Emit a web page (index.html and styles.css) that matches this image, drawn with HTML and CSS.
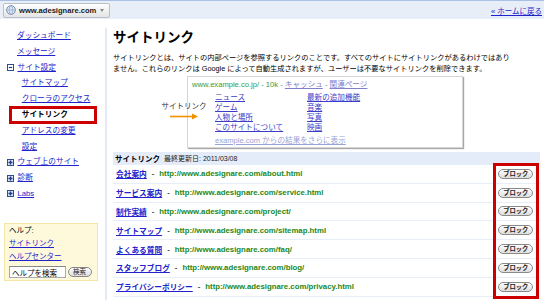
FILE: index.html
```html
<!DOCTYPE html>
<html lang="ja">
<head>
<meta charset="utf-8">
<title>サイトリンク</title>
<link rel="stylesheet" href="styles.css">
</head>
<body>
<header class="topbar">
  <div class="site-select">
    <svg class="globe" width="10" height="10" viewBox="0 0 10 10"><circle cx="5" cy="5" r="4.4" fill="#dbe4f1" stroke="#6f88b3" stroke-width="0.9"/><ellipse cx="5" cy="5" rx="1.8" ry="4.2" fill="none" stroke="#8ea3c6" stroke-width="0.6"/><path d="M1 5h8" stroke="#8ea3c6" stroke-width="0.6"/></svg>
    <span class="site-name">www.adesignare.com</span>
    <span class="caret"></span>
  </div>
  <a class="home-link" href="#">« ホームに戻る</a>
</header>
<div class="layout">
  <nav class="sidebar">
    <ul class="nav">
      <li class="nav-top"><a href="#">ダッシュボード</a></li>
      <li class="nav-top"><a href="#">メッセージ</a></li>
      <li class="nav-group"><svg class="toggle" width="7" height="7" viewBox="0 0 7 7"><rect x="0.5" y="0.5" width="6" height="6" fill="#fff" stroke="#2b4e8c"/><path d="M1.8 3.5h3.4" stroke="#1b3d8c" stroke-width="1.2"/></svg><a href="#">サイト設定</a></li>
      <li class="nav-sub"><a href="#">サイトマップ</a></li>
      <li class="nav-sub"><a href="#">クローラのアクセス</a></li>
      <li class="nav-sub nav-current">サイトリンク</li>
      <li class="nav-sub"><a href="#">アドレスの変更</a></li>
      <li class="nav-sub"><a href="#">設定</a></li>
      <li class="nav-group"><svg class="toggle" width="7" height="7" viewBox="0 0 7 7"><rect x="0.5" y="0.5" width="6" height="6" fill="#dfe7f5" stroke="#2b4e8c"/><path d="M3.5 1.5v4M1.5 3.5h4" stroke="#1b3d8c" stroke-width="1.4"/></svg><a href="#">ウェブ上のサイト</a></li>
      <li class="nav-group"><svg class="toggle" width="7" height="7" viewBox="0 0 7 7"><rect x="0.5" y="0.5" width="6" height="6" fill="#dfe7f5" stroke="#2b4e8c"/><path d="M3.5 1.5v4M1.5 3.5h4" stroke="#1b3d8c" stroke-width="1.4"/></svg><a href="#">診断</a></li>
      <li class="nav-group"><svg class="toggle" width="7" height="7" viewBox="0 0 7 7"><rect x="0.5" y="0.5" width="6" height="6" fill="#dfe7f5" stroke="#2b4e8c"/><path d="M3.5 1.5v4M1.5 3.5h4" stroke="#1b3d8c" stroke-width="1.4"/></svg><a href="#">Labs</a></li>
    </ul>
    <div class="help">
      <div class="help-title">ヘルプ:</div>
      <div><a href="#">サイトリンク</a></div>
      <div><a href="#">ヘルプセンター</a></div>
      <div class="help-search">
        <input class="help-input" type="text" value="ヘルプを検索">
        <button class="help-btn" type="button">検索</button>
      </div>
    </div>
  </nav>
  <main class="main">
    <h1 class="title">サイトリンク</h1>
    <p class="desc">サイトリンクとは、サイトの内部ページを参照するリンクのことです。すべてのサイトにサイトリンクがあるわけではありません。これらのリンクは Google によって自動生成されますが、ユーザーは不要なサイトリンクを削除できます。</p>
    <div class="figure">
      <div class="example">
        <div class="ex-head"><span class="ex-url">www.example.co.jp/ - 10k</span><span class="ex-dash"> - </span><a href="#">キャッシュ</a><span class="ex-dash"> - </span><a href="#">関連ページ</a></div>
        <div class="ex-links">
          <a href="#">ニュース</a><a href="#">最新の追加機能</a>
          <a href="#">ゲーム</a><a href="#">音楽</a>
          <a href="#">人物と場所</a><a href="#">写真</a>
          <a href="#">このサイトについて</a><a href="#">映画</a>
        </div>
        <div class="ex-more"><a href="#">example.com からの結果をさらに表示</a></div>
      </div>
      <div class="ex-label">サイトリンク</div>
      <svg class="ex-arrow" width="29" height="7" viewBox="0 0 29 7"><path d="M0 3.5h23" stroke="#f39200" stroke-width="1.6"/><path d="M22 0.5l6 3-6 3z" fill="#f39200"/></svg>
    </div>
    <div class="sl-table">
      <div class="sl-head"><span class="sl-head-title">サイトリンク</span><span class="sl-head-date">最終更新日: 2011/03/08</span></div>
      <div class="sl-row"><a href="#">会社案内</a><span class="sep">-</span><span class="url">http://www.adesignare.com/about.html</span><button class="block-btn" type="button">ブロック</button></div>
      <div class="sl-row"><a href="#">サービス案内</a><span class="sep">-</span><span class="url">http://www.adesignare.com/service.html</span><button class="block-btn" type="button">ブロック</button></div>
      <div class="sl-row"><a href="#">制作実績</a><span class="sep">-</span><span class="url">http://www.adesignare.com/project/</span><button class="block-btn" type="button">ブロック</button></div>
      <div class="sl-row"><a href="#">サイトマップ</a><span class="sep">-</span><span class="url">http://www.adesignare.com/sitemap.html</span><button class="block-btn" type="button">ブロック</button></div>
      <div class="sl-row"><a href="#">よくある質問</a><span class="sep">-</span><span class="url">http://www.adesignare.com/faq/</span><button class="block-btn" type="button">ブロック</button></div>
      <div class="sl-row"><a href="#">スタッフブログ</a><span class="sep">-</span><span class="url">http://www.adesignare.com/blog/</span><button class="block-btn" type="button">ブロック</button></div>
      <div class="sl-row"><a href="#">プライバシーポリシー</a><span class="sep">-</span><span class="url">http://www.adesignare.com/privacy.html</span><button class="block-btn" type="button">ブロック</button></div>
      <div class="red-frame"></div>
    </div>
  </main>
</div>
</body>
</html>
```
FILE: styles.css
```css
html, body {
  margin: 0;
  padding: 0;
  background: #fff;
}
body {
  width: 544px;
  height: 300px;
  overflow: hidden;
  font-family: "Liberation Sans", "Noto Sans CJK JP", sans-serif;
  color: #000;
}
a {
  color: #2222cc;
  text-decoration: underline;
}

/* top bar */
.topbar {
  box-sizing: border-box;
  height: 19px;
  border-top: 1px solid #a9bfe4;
  background: #e8eef8;
  display: flex;
  align-items: center;
  justify-content: space-between;
  padding: 0 2px 0 3px;
}
.site-select {
  box-sizing: border-box;
  width: 107px;
  height: 15px;
  border: 1px solid #b7c0cc;
  border-radius: 2px;
  background: linear-gradient(#fefefe, #e4e4e4);
  display: flex;
  align-items: center;
  padding-left: 2px;
}
.globe {
  display: block;
  flex: none;
}
.site-name {
  margin-left: 3px;
  font-size: 7.6px;
  font-weight: bold;
  color: #222;
}
.caret {
  margin-left: 4px;
  width: 0;
  height: 0;
  border-left: 2.5px solid transparent;
  border-right: 2.5px solid transparent;
  border-top: 3px solid #888;
}
.home-link {
  font-size: 7.5px;
}

/* layout */
.layout {
  display: flex;
  margin-top: 9px;
  height: 272px;
}
.sidebar {
  width: 105px;
  flex: none;
  border-right: 2px solid #e3e9f4;
}
.nav {
  list-style: none;
  margin: 0;
  padding: 0;
  font-size: 7.7px;
}
.nav li {
  height: 15.8px;
  line-height: 15.8px;
  display: flex;
  align-items: center;
}
.nav-top {
  padding-left: 17px;
}
.nav-group {
  padding-left: 6.5px;
}
.toggle {
  display: block;
  margin-right: 4px;
  flex: none;
}
.nav-sub {
  padding-left: 21.7px;
}
.nav .nav-current {
  box-sizing: border-box;
  width: 86px;
  margin-left: 10px;
  padding-left: 11.7px;
  font-weight: bold;
  color: #000;
  outline: 3px solid #cc0000;
  outline-offset: -2px;
}

/* help */
.help {
  box-sizing: border-box;
  width: 94px;
  margin: 21px 0 0 4px;
  background: #fff9dc;
  border: 1px solid #f6e6a6;
  padding: 0 4px 2px 4px;
  font-size: 7.5px;
  line-height: 13.2px;
}
.help-search {
  display: flex;
  align-items: center;
  margin-top: 3px;
}
.help-input {
  box-sizing: border-box;
  width: 57px;
  height: 12px;
  margin: 0;
  padding: 0 0 0 2px;
  border: 1px solid #aaa;
  border-top-color: #888;
  font-family: inherit;
  font-size: 7.5px;
  color: #000;
}
.help-btn {
  box-sizing: border-box;
  width: 24px;
  height: 10px;
  margin: 0 0 0 1.5px;
  padding: 0;
  border: 1px solid #888;
  border-radius: 5px;
  background: linear-gradient(#fff, #ddd);
  font-family: inherit;
  font-size: 6.5px;
  line-height: 8px;
  color: #222;
}

/* main */
.main {
  flex: 1;
  min-width: 0;
  padding: 0 4px 0 6px;
}
.title {
  margin: 2px 0 0;
  font-size: 13.5px;
  line-height: 16px;
  font-weight: bold;
}
.desc {
  margin: 6px 0 0;
  max-width: 402px;
  font-size: 7.25px;
  line-height: 11px;
}

/* example figure */
.figure {
  position: relative;
  margin-top: 2px;
}
.example {
  box-sizing: border-box;
  width: 276px;
  height: 72px;
  margin-left: 74px;
  border: 1px solid #d6d6d6;
  box-shadow: 1px 1px 1px #a8a8a8;
  padding: 3px 0 0 4px;
  font-size: 7.6px;
  line-height: 10px;
}
.example a {
  color: #3c3cc8;
}
.ex-head .ex-url {
  color: #3b9a3b;
}
.ex-dash {
  color: #6a9a6a;
}
.ex-head a {
  color: #8080cc;
}
.ex-links {
  display: grid;
  grid-template-columns: 92px auto;
  justify-items: start;
  margin: 3.4px 0 0 23px;
  line-height: 9.8px;
}
.ex-more {
  margin: 3px 0 0 23px;
}
.ex-more a {
  color: #99a3d6;
}
.ex-label {
  position: absolute;
  left: 48.5px;
  top: 26.3px;
  font-size: 7.5px;
  line-height: 10px;
  color: #333;
}
.ex-arrow {
  position: absolute;
  left: 57px;
  top: 37.3px;
  display: block;
}

/* sitelinks table */
.sl-table {
  position: relative;
  margin-top: 3.7px;
}
.sl-head {
  box-sizing: border-box;
  height: 13.3px;
  background: #e5ecf9;
  display: flex;
  align-items: center;
  padding-left: 2px;
}
.sl-head-title {
  font-size: 7.5px;
  font-weight: bold;
}
.sl-head-date {
  margin-left: 4px;
  font-size: 7px;
  color: #222;
}
.sl-row {
  box-sizing: border-box;
  height: 18.8px;
  border-bottom: 1px solid #e8eef8;
  display: flex;
  align-items: center;
  padding: 0 6.7px 0 3px;
  font-size: 7.7px;
  font-weight: bold;
}
.sep {
  margin: 0 5px;
  color: #444;
}
.url {
  color: #228822;
  font-size: 7.8px;
}
.block-btn {
  box-sizing: border-box;
  margin: 0 0 0 auto;
  width: 35px;
  height: 10px;
  padding: 0;
  border: 1px solid #8a8a8a;
  border-radius: 6px;
  background: linear-gradient(#ffffff, #dcdcdc);
  font-family: inherit;
  font-size: 6.3px;
  font-weight: bold;
  line-height: 8px;
  color: #222;
}
.red-frame {
  position: absolute;
  top: 11px;
  right: 1px;
  width: 46px;
  height: 136px;
  box-sizing: border-box;
  border: 3px solid #cc0000;
  pointer-events: none;
}
```
